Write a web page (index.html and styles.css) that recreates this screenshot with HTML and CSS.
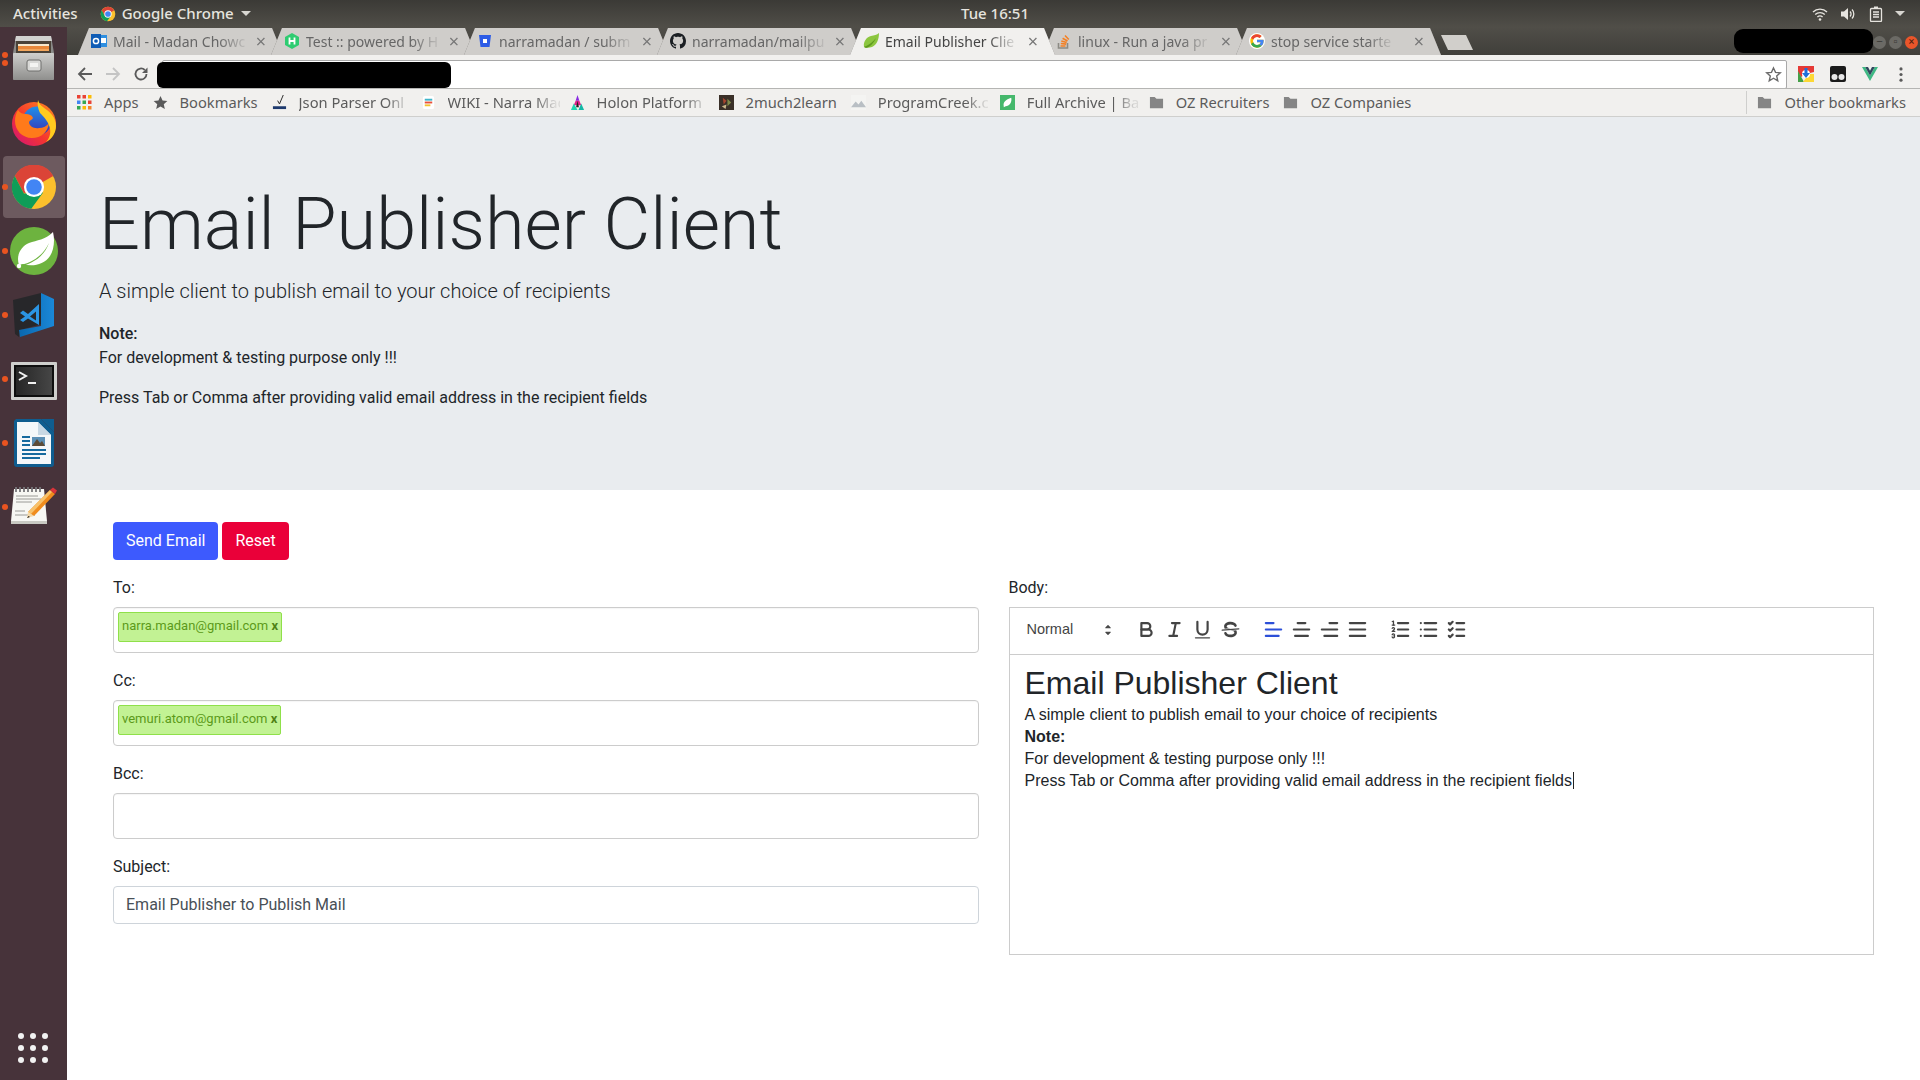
FILE: index.html
```html
<!DOCTYPE html>
<html lang="en">
<head>
    <meta charset="UTF-8">
    <title>Email Publisher Client</title>
    <link rel="stylesheet" href="styles.css">
</head>
<body>
    <div class="topbar">
        <div class="topbar-left">
            <span class="topbar-item">Activities</span>
            <svg class="app-icon" viewBox="0 0 48 48"><circle cx="24" cy="24" r="22" fill="#fbc02d"/><path fill="#db4437" d="M24 24L43 13A22 22 0 0 0 5 13L14.500 30Z"/><path fill="#0f9d58" d="M5 13A22 22 0 0 0 21 45.800L33 30L14.500 30Z"/><circle cx="24" cy="24" r="11" fill="#fff"/><circle cx="24" cy="24" r="8.500" fill="#4285f4"/></svg>
            <span class="topbar-item">Google Chrome</span>
            <span class="caret-down"></span>
        </div>
        <div class="topbar-clock">Tue 16:51</div>
        <div class="topbar-right">
            <svg class="tray-icon" viewBox="0 0 16 16" fill="none" stroke="#e6e4df" stroke-width="1.400"><path d="M1 6a10 10 0 0 1 14 0"/><path d="M3.200 8.500a7 7 0 0 1 9.600 0"/><path d="M5.400 11a4 4 0 0 1 5.200 0"/><circle cx="8" cy="13.500" r="1.300" fill="#e6e4df" stroke="none"/></svg>
            <svg class="tray-icon" viewBox="0 0 16 16" fill="none" stroke="#e6e4df" stroke-width="1.300"><path fill="#e6e4df" stroke="none" d="M1 5.500h3L8 2v12L4 10.500H1z"/><path d="M10 5.500a3.500 3.500 0 0 1 0 5"/><path d="M12 3.500a6.500 6.500 0 0 1 0 9"/></svg>
            <svg class="tray-icon" viewBox="0 0 16 16" fill="none" stroke="#e6e4df" stroke-width="1.300"><rect x="2.500" y="2.500" width="11" height="13" rx="1"/><rect x="6" y="0.500" width="4" height="2" fill="#e6e4df" stroke="none"/><path d="M5 6h6M5 8.500h6M5 11h6" stroke-width="1.500"/></svg>
            <span class="caret-down"></span>
        </div>
    </div>

    <div class="desktop">
        <div class="dock">
            <div class="dock-item dots-two"><div class="dock-tile">
                <svg class="icon-files" viewBox="0 0 41 44"><defs><linearGradient id="cab" x1="0" y1="0" x2="0" y2="1"><stop offset="0" stop-color="#cfcfcd"/><stop offset="1" stop-color="#8f8f8d"/></linearGradient></defs><path fill="#8a8a88" d="M3 0H38L41 17V42a2 2 0 0 1-2 2H2a2 2 0 0 1-2-2V17Z"/><path fill="#d2d2d0" d="M3 0H38L39 5H2Z"/><rect x="3" y="5" width="35" height="13" fill="#4a4238"/><rect x="5" y="8" width="31" height="2" fill="#f6e7cc"/><rect x="5" y="10" width="31" height="3" fill="#e8883a"/><rect x="5" y="13" width="31" height="2" fill="#f2a65c"/><rect y="17" width="41" height="27" rx="1" fill="url(#cab)"/><rect x="14" y="24" width="14" height="11" rx="2" fill="#d9d9d7" stroke="#6f6f6d"/><rect x="17" y="27" width="8" height="4" fill="#f4f4f2"/></svg>
            </div></div>
            <div class="dock-item no-dot"><div class="dock-tile">
                <svg class="icon-firefox" viewBox="0 0 44 46"><defs><linearGradient id="ff" x1="1" y1="0" x2="0" y2="1"><stop offset="0" stop-color="#ff8f1f"/><stop offset="0.550" stop-color="#f5362e"/><stop offset="1" stop-color="#d1117c"/></linearGradient><linearGradient id="ffb" x1="0.500" y1="0" x2="0.500" y2="1"><stop offset="0" stop-color="#1f90ea"/><stop offset="1" stop-color="#3b2fb0"/></linearGradient></defs><circle cx="22" cy="24" r="22" fill="url(#ff)"/><circle cx="25" cy="21" r="14.500" fill="url(#ffb)"/><path fill="#ff7a1a" d="M6 10c2 3 5 4 8 4c3 0 6 1 7 4c-1 2-3 2-4 4c0 4 5 7 10 6c4 0 8-2 10-5c-1 9-8 15-17 15c-10 0-17-8-17-17c0-4 1-8 3-11z"/><path fill="#ffcb1f" d="M26 0c1 3 2 5 5 7c7 5 13 10 13 19c0 7-4 13-10 16c3-3 5-8 4-13c-1-7-6-12-10-16c-2-4-3-9-2-13z"/></svg>
            </div></div>
            <div class="dock-item active"><div class="dock-tile">
                <svg class="chrome-lg" viewBox="0 0 48 48"><circle cx="24" cy="24" r="24" fill="#fbc02d"/><path fill="#db4437" d="M24 24L45 12A24 24 0 0 0 3 12L13 31Z"/><path fill="#0f9d58" d="M3 12A24 24 0 0 0 21 47.800L34 30L13 31Z"/><circle cx="24" cy="24" r="11" fill="#fff"/><circle cx="24" cy="24" r="8.500" fill="#4285f4"/></svg>
            </div></div>
            <div class="dock-item"><div class="dock-tile">
                <svg class="spring-lg" viewBox="0 0 48 48"><circle cx="24" cy="24" r="24" fill="#6db33f"/><path fill="#fff" d="M9 38c-3-9 1-18 10-22c8-3 16-3 24-11c2 8 1 18-3 24c-6 9-18 11-27 8z"/><path fill="#6db33f" d="M9 38c9-1 22-6 30-22c-5 14-17 21-30 24z"/><circle cx="9" cy="39" r="2.200" fill="#fff"/></svg>
            </div></div>
            <div class="dock-item"><div class="dock-tile">
                <svg class="icon-code" viewBox="0 0 41 44"><defs><linearGradient id="vs" x1="0" y1="0" x2="1" y2="0"><stop offset="0" stop-color="#0a67ad"/><stop offset="1" stop-color="#1a88d8"/></linearGradient></defs><path fill="#27272a" d="M0 7L28 0L29 31L7 37L6 44L2 41Z"/><path fill="url(#vs)" d="M28 0L41 6V33L7 44L6 37L28 33Z"/><path fill="#2b95e4" d="M7 20L10 17.500L15 21L26 11V32L15 25.500L10 29L7 27L12 23.500Z"/><path fill="#27272a" d="M17 23.500L23 18.500V27.500Z"/></svg>
            </div></div>
            <div class="dock-item"><div class="dock-tile">
                <svg class="icon-term" viewBox="0 0 46 38"><defs><linearGradient id="tm" x1="0" y1="0" x2="1" y2="0"><stop offset="0" stop-color="#262626"/><stop offset="1" stop-color="#464646"/></linearGradient></defs><rect width="46" height="38" rx="1" fill="#cfcfcd"/><rect x="3" y="3" width="40" height="32" fill="#0e0e0e"/><rect x="5" y="5" width="36" height="28" fill="url(#tm)"/><path d="M8 10L15 14L8 18" fill="none" stroke="#f2f2f2" stroke-width="2"/><rect x="17" y="20" width="8" height="2" fill="#f2f2f2"/></svg>
            </div></div>
            <div class="dock-item"><div class="dock-tile">
                <svg class="icon-writer" viewBox="0 0 40 48"><path fill="#0f5d8f" d="M2 0H27L40 13V45a3 3 0 0 1-3 3H3a3 3 0 0 1-3-3V2Z"/><path fill="#f4f7f9" d="M3 3H24L37 16V45H3Z"/><path fill="#0f5d8f" d="M27 0H40V13Z"/><path fill="#c8d8e4" d="M24 3L37 16H24Z"/><rect x="8" y="17" width="8" height="2" fill="#156a9e"/><rect x="8" y="21" width="8" height="2" fill="#156a9e"/><rect x="8" y="25" width="8" height="2" fill="#156a9e"/><rect x="18" y="18" width="13" height="9" fill="#5b8fb5"/><path fill="#5c4c38" d="M18 27L23 20L26 24L28 22L31 27Z"/><rect x="8" y="30" width="24" height="2" fill="#156a9e"/><rect x="8" y="34" width="24" height="2" fill="#156a9e"/><rect x="8" y="38" width="18" height="2" fill="#156a9e"/></svg>
            </div></div>
            <div class="dock-item"><div class="dock-tile">
                <svg class="icon-gedit" viewBox="0 0 46 37"><path fill="#f7f7f3" d="M3 2H33L36 34H0Z"/><path fill="#c9c9c2" d="M0 34H36L36 37H0Z"/><path d="M5 0v5M9 0v5M13 0v5M17 0v5M21 0v5M25 0v5M29 0v5" stroke="#77777a" stroke-width="1.800"/><path d="M5 9h22M5 12h25M5 15h16M4 24h10M4 28h20" stroke="#9a9a96" stroke-width="1"/><path fill="#f08c1c" d="M39 3L44 7L23 29L17 25Z"/><path fill="#f7c26b" d="M39 3L41 5L20 27L17 25Z"/><path fill="#f5d9a8" d="M17 25L23 29L16 31Z"/><path fill="#111" d="M17.500 29L16 31L19 30Z"/><path fill="#d8343a" d="M39 3L42 0.500L46 3.500L44 7Z"/></svg>
            </div></div>
            <svg class="show-apps" viewBox="0 0 30 30" fill="#f2f2f2"><circle cx="3" cy="3" r="3"/><circle cx="15" cy="3" r="3"/><circle cx="27" cy="3" r="3"/><circle cx="3" cy="15" r="3"/><circle cx="15" cy="15" r="3"/><circle cx="27" cy="15" r="3"/><circle cx="3" cy="27" r="3"/><circle cx="15" cy="27" r="3"/><circle cx="27" cy="27" r="3"/></svg>
        </div>

        <div class="browser">
            <div class="tabstrip">
                <div class="tab">
                    <svg class="favicon" viewBox="0 0 16 16"><rect x="6" y="2" width="10" height="12" fill="#2f8fe0"/><rect x="9" y="5" width="6" height="5" fill="#fff"/><rect y="1" width="10" height="14" fill="#0f5cb5"/><circle cx="5" cy="8" r="2.600" fill="none" stroke="#fff" stroke-width="1.500"/></svg>
                    <span class="tab-title">Mail - Madan Chowc</span><span class="tab-close">×</span>
                </div>
                <div class="tab">
                    <svg class="favicon" viewBox="0 0 16 16"><path fill="#2ecc71" d="M8 0L15 4V12L8 16L1 12V4Z"/><path d="M5.500 4.500v7M10.500 4.500v7M5.500 8h5" stroke="#fff" stroke-width="1.800" fill="none"/></svg>
                    <span class="tab-title">Test :: powered by H</span><span class="tab-close">×</span>
                </div>
                <div class="tab">
                    <svg class="favicon" viewBox="0 0 16 16"><path fill="#2d5ce6" d="M2 2H14L12.500 14H3.500Z"/><rect x="6" y="6" width="4" height="4" fill="#fff"/></svg>
                    <span class="tab-title">narramadan / subm</span><span class="tab-close">×</span>
                </div>
                <div class="tab">
                    <svg class="favicon" viewBox="0 0 16 16"><path fill="#1b1f23" d="M8 0C3.580 0 0 3.580 0 8c0 3.540 2.290 6.530 5.470 7.590.4.07.55-.17.55-.38 0-.19-.01-.82-.01-1.490-2.010.37-2.530-.49-2.690-.94-.09-.23-.48-.94-.82-1.130-.28-.15-.68-.52-.01-.53.63-.01 1.080.58 1.230.82.72 1.210 1.870.87 2.330.66.07-.52.28-.87.51-1.070-1.780-.2-3.640-.89-3.640-3.950 0-.87.31-1.590.82-2.150-.08-.2-.36-1.020.08-2.120 0 0 .67-.21 2.200.82.64-.18 1.320-.27 2-.27.68 0 1.360.09 2 .27 1.530-1.040 2.200-.82 2.200-.82.44 1.100.16 1.920.08 2.120.51.56.82 1.270.82 2.150 0 3.070-1.870 3.750-3.650 3.950.29.25.54.73.54 1.480 0 1.070-.01 1.930-.01 2.200 0 .21.15.46.55.38A8.013 8.013 0 0016 8c0-4.420-3.580-8-8-8z"/></svg>
                    <span class="tab-title">narramadan/mailpu</span><span class="tab-close">×</span>
                </div>
                <div class="tab active">
                    <svg class="favicon" viewBox="0 0 16 16"><path fill="#8cc63f" d="M1 14C0 8 4 4 8 3C11 2 14 2 16 0C16 6 14 12 9 14C6 15 3 15 1 14Z"/><path fill="#5f9a1e" d="M1 14C6 12 10 9 13 5C11 10 7 14 3 15Z"/></svg>
                    <span class="tab-title">Email Publisher Clie</span><span class="tab-close">×</span>
                </div>
                <div class="tab">
                    <svg class="favicon" viewBox="0 0 16 16" fill="none" stroke="#f48024" stroke-width="1.600"><path stroke="#8c8a84" d="M2.500 10v5h9v-5"/><path d="M4.500 13h5M4.800 10.500l5.400 .6M5.300 8l5.400 1.600M6.600 5.200l4.900 2.800M9 2.500l3.800 4"/></svg>
                    <span class="tab-title">linux - Run a java pr</span><span class="tab-close">×</span>
                </div>
                <div class="tab">
                    <svg class="favicon" viewBox="0 0 48 48"><circle cx="24" cy="24" r="24" fill="#fff"/><path fill="#fbbc05" d="M43.600 20.500H42V20H24v8h11.300C33.700 32.700 29.200 36 24 36c-6.600 0-12-5.400-12-12s5.400-12 12-12c3.100 0 5.800 1.200 8 3l5.700-5.700C34 6.100 29.300 4 24 4 13 4 4 13 4 24s9 20 20 20 20-9 20-20c0-1.200-.1-2.300-.4-3.500z"/><path fill="#ea4335" d="M6.300 14.700l6.600 4.800C14.700 15.100 19 12 24 12c3.100 0 5.800 1.200 8 3l5.700-5.700C34 6.100 29.300 4 24 4 16.300 4 9.700 8.300 6.300 14.700z"/><path fill="#34a853" d="M24 44c5.200 0 9.900-2 13.400-5.200l-6.200-5.200C29.200 35.100 26.700 36 24 36c-5.200 0-9.600-3.300-11.300-7.900l-6.500 5C9.500 39.600 16.200 44 24 44z"/><path fill="#4285f4" d="M43.600 20.500H42V20H24v8h11.300c-.8 2.200-2.200 4.200-4.100 5.600l6.200 5.200C37 39.200 44 34 44 24c0-1.200-.1-2.300-.4-3.500z"/></svg>
                    <span class="tab-title">stop service starte</span><span class="tab-close">×</span>
                </div>
                <div class="new-tab"></div>
                <div class="profile-mask"></div>
                <div class="window-buttons">
                    <span class="win-btn">–</span>
                    <span class="win-btn">▫</span>
                    <span class="win-btn close">×</span>
                </div>
            </div>

            <div class="toolbar">
                <svg class="nav-icon" viewBox="0 0 16 16" fill="none" stroke="#5a5a5a" stroke-width="1.800"><path d="M15 8H2M8 2L2 8L8 14"/></svg>
                <svg class="nav-icon" viewBox="0 0 16 16" fill="none" stroke="#c4c4c4" stroke-width="1.800"><path d="M1 8H14M8 2L14 8L8 14"/></svg>
                <svg class="nav-icon" viewBox="0 0 16 16" fill="none" stroke="#5a5a5a" stroke-width="1.800"><path d="M13.500 8a5.500 5.500 0 1 1-1.700-4"/><path fill="#5a5a5a" stroke="none" d="M14.500 1.500V7H9Z"/></svg>
                <div class="omnibox">
                    <div class="url-mask"></div>
                    <svg class="star" viewBox="0 0 16 16" fill="none" stroke="#6a6a6a" stroke-width="1.300"><path d="M8 1.800L9.900 6L14.400 6.400L11 9.400L12 13.900L8 11.500L4 13.900L5 9.400L1.600 6.400L6.100 6Z"/></svg>
                </div>
                <div class="extensions">
                    <svg class="ext-icon" viewBox="0 0 16 16"><path fill="#e53935" d="M0 0H16V6L8 8L3 11L0 6Z"/><path fill="#43a047" d="M0 5L6 16H0Z"/><path fill="#fdd835" d="M5 16L11 8H16V16Z"/><circle cx="8" cy="8" r="4" fill="#fff"/><path fill="#1e6fd9" d="M6.500 2H9.500V7H12L8 12L4 7H6.500Z"/></svg>
                    <svg class="ext-icon" viewBox="0 0 16 16"><path fill="#1b1b1b" d="M2 0H14a2 2 0 0 1 2 2V14a2 2 0 0 1-2 2H2a2 2 0 0 1-2-2V2a2 2 0 0 1 2-2Z"/><circle cx="4.500" cy="11" r="3" fill="#e8e8e8"/><circle cx="11.500" cy="11" r="3" fill="#e8e8e8"/></svg>
                    <svg class="ext-icon" viewBox="0 0 16 16"><path fill="#3fb984" d="M0 1H3.200L8 9.500L12.800 1H16L8 15Z"/><path fill="#31475e" d="M3.200 1H6L8 4.800L10 1H12.800L8 9.500Z"/></svg>
                    <svg class="menu-dots" viewBox="0 0 4 16" fill="#5a5a5a"><circle cx="2" cy="2" r="1.700"/><circle cx="2" cy="8" r="1.700"/><circle cx="2" cy="14" r="1.700"/></svg>
                </div>
            </div>

            <div class="bookmarks">
                <div class="bm">
                    <svg class="bm-icon" viewBox="0 0 15 15"><rect width="3.500" height="3.500" fill="#ea4335"/><rect x="5.500" width="3.500" height="3.500" fill="#ea4335"/><rect x="11" width="3.500" height="3.500" fill="#fbbc05"/><rect y="5.500" width="3.500" height="3.500" fill="#4285f4"/><rect x="5.500" y="5.500" width="3.500" height="3.500" fill="#34a853"/><rect x="11" y="5.500" width="3.500" height="3.500" fill="#ea4335"/><rect y="11" width="3.500" height="3.500" fill="#34a853"/><rect x="5.500" y="11" width="3.500" height="3.500" fill="#fbbc05"/><rect x="11" y="11" width="3.500" height="3.500" fill="#f4862a"/></svg>
                    <span>Apps</span>
                </div>
                <div class="bm">
                    <svg class="bm-icon" viewBox="0 0 16 16" fill="#5a5a5a"><path d="M8 1L10.200 5.800L15.300 6.300L11.500 9.800L12.600 14.900L8 12.300L3.400 14.900L4.500 9.800L.7 6.300L5.800 5.800Z"/></svg>
                    <span>Bookmarks</span>
                </div>
                <div class="bm">
                    <svg class="bm-icon" viewBox="0 0 16 16"><path d="M6 6L8 9.500L12 0" fill="none" stroke="#222" stroke-width="1"/><rect x="1" y="12" width="14" height="3" fill="#1e3a6e"/></svg>
                    <span class="bm-fade">Json Parser Onl</span>
                </div>
                <div class="bm">
                    <svg class="bm-icon" viewBox="0 0 16 16"><rect x="2" y="1" width="12" height="14" rx="2" fill="#fff"/><rect x="4" y="4" width="8" height="2" fill="#3fb5c9"/><rect x="4" y="7" width="8" height="2" fill="#e8503a"/><rect x="4" y="10" width="6" height="2" fill="#f2c230"/></svg>
                    <span class="bm-fade">WIKI - Narra Mac</span>
                </div>
                <div class="bm">
                    <svg class="bm-icon" viewBox="0 0 16 16"><path fill="#8a2be2" d="M8 0L10 6H6Z"/><path fill="#e0218a" d="M6 6H10L12 11H4Z"/><path fill="#22d3b0" d="M4 9L8 16H1Z"/><path fill="#14b8a6" d="M12 9L15 16H9Z"/><path fill="#222" d="M8 6L9.500 13H6.500Z"/></svg>
                    <span class="bm-fade">Holon Platform</span>
                </div>
                <div class="bm">
                    <svg class="bm-icon" viewBox="0 0 16 16"><rect width="16" height="16" fill="#3a3028"/><path fill="#a8452e" d="M4 3L8 6L5 10Z"/><path fill="#7f8a4a" d="M9 4L13 8L9 12Z"/><path fill="#c9b68a" d="M3 12L8 10L7 15Z"/></svg>
                    <span>2much2learn</span>
                </div>
                <div class="bm">
                    <svg class="bm-icon" viewBox="0 0 16 16"><rect width="16" height="16" fill="#f4f4f2"/><path fill="#b9bfc4" d="M0 13L5 7L8 10L11 6L16 13Z"/></svg>
                    <span class="bm-fade">ProgramCreek.c</span>
                </div>
                <div class="bm">
                    <svg class="bm-icon" viewBox="0 0 16 16"><rect width="16" height="16" fill="#45b86c"/><path fill="#fff" d="M4 12C3 8 6 5 12 3C13 8 10 12 6 12L4 13Z"/></svg>
                    <span class="bm-fade">Full Archive | Ba</span>
                </div>
                <div class="bm">
                    <svg class="bm-icon" viewBox="0 0 16 16" fill="#858585"><path d="M1 2H6L8 4H15V14H1Z"/></svg>
                    <span>OZ Recruiters</span>
                </div>
                <div class="bm">
                    <svg class="bm-icon" viewBox="0 0 16 16" fill="#858585"><path d="M1 2H6L8 4H15V14H1Z"/></svg>
                    <span>OZ Companies</span>
                </div>
                <div class="bm bm-other">
                    <svg class="bm-icon" viewBox="0 0 16 16" fill="#858585"><path d="M1 2H6L8 4H15V14H1Z"/></svg>
                    <span>Other bookmarks</span>
                </div>
            </div>

            <div class="page">
                <div class="jumbotron">
                    <h1>Email Publisher Client</h1>
                    <p class="lead">A simple client to publish email to your choice of recipients</p>
                    <p><strong>Note:</strong><br>For development &amp; testing purpose only !!!</p>
                    <p>Press Tab or Comma after providing valid email address in the recipient fields</p>
                </div>

                <div class="content">
                    <div class="actions">
                        <button class="btn btn-send">Send Email</button>
                        <button class="btn btn-reset">Reset</button>
                    </div>
                    <div class="columns">
                        <div class="fields">
                            <div class="field">
                                <label>To:</label>
                                <div class="tag-input"><span class="tag">narra.madan@gmail.com <b>x</b></span></div>
                            </div>
                            <div class="field">
                                <label>Cc:</label>
                                <div class="tag-input"><span class="tag">vemuri.atom@gmail.com <b>x</b></span></div>
                            </div>
                            <div class="field">
                                <label>Bcc:</label>
                                <div class="tag-input"></div>
                            </div>
                            <div class="field">
                                <label>Subject:</label>
                                <input class="text-input" type="text" value="Email Publisher to Publish Mail">
                            </div>
                        </div>
                        <div class="body-field">
                            <label>Body:</label>
                            <div class="ql-toolbar">
                                <span class="ql-picker">Normal
                                    <svg class="ql-arrows" viewBox="0 0 18 18"><polygon points="7 11 9 13 11 11 7 11"/><polygon points="7 7 9 5 11 7 7 7"/></svg>
                                </span>
                                <span class="ql-group">
                                    <svg class="ql-btn" viewBox="0 0 18 18"><path d="M5,4H9.500A2.500,2.500,0,0,1,12,6.500v0A2.500,2.500,0,0,1,9.500,9H5A0,0,0,0,1,5,9V4A0,0,0,0,1,5,4Z"/><path d="M5,9h5.500A2.500,2.500,0,0,1,13,11.500v0A2.500,2.500,0,0,1,10.500,14H5a0,0,0,0,1,0,0V9A0,0,0,0,1,5,9Z"/></svg>
                                    <svg class="ql-btn" viewBox="0 0 18 18"><line x1="7" x2="13" y1="4" y2="4"/><line x1="5" x2="11" y1="14" y2="14"/><line x1="8" x2="10" y1="14" y2="4"/></svg>
                                    <svg class="ql-btn" viewBox="0 0 18 18"><path d="M5,3V9a4.012,4.012,0,0,0,4,4H9a4.012,4.012,0,0,0,4-4V3"/><rect class="ql-fill" height="1" rx=".5" ry=".5" width="12" x="3" y="15"/></svg>
                                    <svg class="ql-btn" viewBox="0 0 18 18"><line class="ql-thin" x1="15.500" x2="2.500" y1="8.500" y2="9.500"/><path class="ql-fill" d="M9.007,8C6.542,7.791,6,7.519,6,6.500,6,5.792,7.283,5,9,5c1.571,0,2.765.679,2.969,1.309a1,1,0,0,0,1.900-.617C13.356,4.106,11.354,3,9,3,6.200,3,4,4.538,4,6.500a3.200,3.200,0,0,0,.5,1.843Z"/><path class="ql-fill" d="M8.984,10C11.457,10.208,12,10.479,12,11.500c0,.708-1.283,1.500-3,1.500-1.571,0-2.765-.679-2.969-1.309a1,1,0,1,0-1.900.617C4.644,13.894,6.646,15,9,15c2.800,0,5-1.538,5-3.500a3.200,3.200,0,0,0-.5-1.843Z"/></svg>
                                </span>
                                <span class="ql-group">
                                    <svg class="ql-btn ql-active" viewBox="0 0 18 18"><line x1="3" x2="15" y1="9" y2="9"/><line x1="3" x2="13" y1="14" y2="14"/><line x1="3" x2="9" y1="4" y2="4"/></svg>
                                    <svg class="ql-btn" viewBox="0 0 18 18"><line x1="15" x2="3" y1="9" y2="9"/><line x1="14" x2="4" y1="14" y2="14"/><line x1="12" x2="6" y1="4" y2="4"/></svg>
                                    <svg class="ql-btn" viewBox="0 0 18 18"><line x1="15" x2="3" y1="9" y2="9"/><line x1="15" x2="5" y1="14" y2="14"/><line x1="15" x2="9" y1="4" y2="4"/></svg>
                                    <svg class="ql-btn" viewBox="0 0 18 18"><line x1="15" x2="3" y1="9" y2="9"/><line x1="15" x2="3" y1="14" y2="14"/><line x1="15" x2="3" y1="4" y2="4"/></svg>
                                </span>
                                <span class="ql-group">
                                    <svg class="ql-btn" viewBox="0 0 18 18"><line x1="7" x2="15" y1="4" y2="4"/><line x1="7" x2="15" y1="9" y2="9"/><line x1="7" x2="15" y1="14" y2="14"/><line class="ql-thin" x1="2.500" x2="4.500" y1="5.500" y2="5.500"/><path class="ql-fill" d="M3.500,6A0.500,0.500,0,0,1,3,5.500V3.085l-0.276.138A0.500,0.500,0,0,1,2.053,3c-0.124-.247-0.023-0.324.224-0.447l1-.5A0.500,0.500,0,0,1,4,2.500v3A0.500,0.500,0,0,1,3.500,6Z"/><path class="ql-thin" d="M4.500,10.500h-2c0-.234,1.850-1.076,1.850-2.234A0.959,0.959,0,0,0,2.500,8.156"/><path class="ql-thin" d="M2.500,14.846a0.959,0.959,0,0,0,1.850-.109A0.700,0.700,0,0,0,3.750,14a0.688,0.688,0,0,0,.6-0.736,0.959,0.959,0,0,0-1.850-.109"/></svg>
                                    <svg class="ql-btn" viewBox="0 0 18 18"><line x1="6" x2="15" y1="4" y2="4"/><line x1="6" x2="15" y1="9" y2="9"/><line x1="6" x2="15" y1="14" y2="14"/><line x1="3" x2="3" y1="4" y2="4"/><line x1="3" x2="3" y1="9" y2="9"/><line x1="3" x2="3" y1="14" y2="14"/></svg>
                                    <svg class="ql-btn" viewBox="0 0 18 18"><line x1="9" x2="15" y1="4" y2="4"/><polyline points="3 4 4 5 6 3"/><line x1="9" x2="15" y1="14" y2="14"/><polyline points="3 14 4 15 6 13"/><line x1="9" x2="15" y1="9" y2="9"/><polyline points="3 9 4 10 6 8"/></svg>
                                </span>
                            </div>
                            <div class="ql-editor">
                                <h2>Email Publisher Client</h2>
                                <p>A simple client to publish email to your choice of recipients</p>
                                <p><strong>Note:</strong></p>
                                <p>For development &amp; testing purpose only !!!</p>
                                <p>Press Tab or Comma after providing valid email address in the recipient fields<span class="cursor"></span></p>
                            </div>
                        </div>
                    </div>
                </div>
            </div>
        </div>
    </div>
</body>
</html>
```

FILE: styles.css
```css
* { margin: 0; padding: 0; box-sizing: border-box; }

html, body { height: 100%; overflow: hidden; }

body {
    font-family: Roboto, "Liberation Sans", sans-serif;
    font-size: 16px;
    line-height: 1.5;
    color: #212529;
    background: #fff;
    display: flex;
    flex-direction: column;
}

/* ubuntu top bar */
.topbar {
    height: 27px;
    flex: none;
    display: flex;
    align-items: center;
    justify-content: space-between;
    position: relative;
    padding: 0 15px 0 13px;
    background: linear-gradient(#3b3a36, #504e48);
    color: #e6e4df;
    font-family: "Noto Sans", sans-serif;
    font-size: 15px;
    font-weight: 500;
}

.topbar-left, .topbar-right {
    display: flex;
    align-items: center;
}

.app-icon { width: 16px; height: 16px; margin: 0 6px 0 22px; }

.caret-down {
    width: 0;
    height: 0;
    margin-left: 7px;
    border-left: 5px solid transparent;
    border-right: 5px solid transparent;
    border-top: 5px solid #d8d6d1;
}

.topbar-clock {
    position: absolute;
    left: 961px;
    top: 0;
    line-height: 27px;
}

.topbar-right { gap: 12px; }
.tray-icon { width: 16px; height: 16px; }
.topbar-right .caret-down { margin-left: -1px; }

/* dock */
.desktop {
    flex: 1;
    min-height: 0;
    display: flex;
}

.dock {
    width: 67px;
    flex: none;
    display: flex;
    flex-direction: column;
    background: #47333a;
    padding-bottom: 17px;
}

.dock-item {
    height: 64px;
    flex: none;
    display: flex;
    align-items: center;
    justify-content: center;
    position: relative;
}

.dock-item::before {
    content: "";
    position: absolute;
    left: 2px;
    top: 29px;
    width: 6px;
    height: 6px;
    border-radius: 50%;
    background: #e95420;
}

.dock-item.no-dot::before { display: none; }
.dock-item.dots-two::before { top: 25px; box-shadow: 0 8px 0 #e95420; }

.dock-tile {
    width: 62px;
    height: 62px;
    border-radius: 4px;
    display: flex;
    align-items: center;
    justify-content: center;
}

.dock-item.active .dock-tile { background: #6d5a5f; }

.icon-files { width: 41px; height: 44px; margin-bottom: 2px; }
.icon-firefox { width: 44px; height: 46px; }
.chrome-lg { width: 44px; height: 44px; }
.spring-lg { width: 48px; height: 48px; }
.icon-code { width: 41px; height: 44px; }
.icon-term { width: 46px; height: 38px; margin-top: 4px; }
.icon-writer { width: 40px; height: 48px; }
.icon-gedit { width: 46px; height: 37px; margin-bottom: 4px; }

.show-apps {
    width: 30px;
    height: 30px;
    margin: auto 0 0 18px;
}

/* chrome window */
.browser {
    flex: 1;
    min-width: 0;
    display: flex;
    flex-direction: column;
}

.tabstrip {
    height: 28px;
    flex: none;
    display: flex;
    align-items: stretch;
    padding-left: 11px;
    background: linear-gradient(#504e48, #403f3a);
}

.tab {
    width: 205px;
    margin-right: -12px;
    padding: 0 14px 0 13px;
    display: flex;
    align-items: center;
    position: relative;
    z-index: 1;
    font-family: "Noto Sans", sans-serif;
    font-size: 14px;
    color: #666;
    filter: drop-shadow(0 0 .6px #6f6e6a);
}

.tab::before {
    content: "";
    position: absolute;
    inset: 1px 0 0 0;
    z-index: -1;
    background: #cfcdca;
    clip-path: polygon(0 100%, 11px 0, calc(100% - 11px) 0, 100% 100%);
}

.tab.active { z-index: 2; color: #444; }
.tab.active::before { background: #f1f0ee; }

.favicon { width: 16px; height: 16px; flex: none; margin-right: 6px; }

.tab-title {
    white-space: nowrap;
    -webkit-mask-image: linear-gradient(to right, #000 80%, rgba(0, 0, 0, .15));
    mask-image: linear-gradient(to right, #000 80%, rgba(0, 0, 0, .15));
}

.tab-close {
    width: 16px;
    margin-left: auto;
    text-align: center;
    font-size: 18px;
    line-height: 1;
    color: #777;
}

.new-tab {
    width: 32px;
    height: 15px;
    margin: 8px 0 0 12px;
    background: #d1cfcb;
    clip-path: polygon(0 0, calc(100% - 7px) 0, 100% 100%, 7px 100%);
}

.profile-mask {
    width: 139px;
    height: 24px;
    margin: 2px 0 0 261px;
    background: #000;
    border-radius: 9px;
}

.window-buttons {
    display: flex;
    align-items: center;
    gap: 3px;
    margin-top: 2px;
}

.win-btn {
    width: 13px;
    height: 13px;
    border-radius: 50%;
    background: #6b6a65;
    color: #3b3a36;
    font-size: 11px;
    line-height: 12px;
    text-align: center;
}

.win-btn.close { background: #e9552a; color: #4a2010; }

/* address bar */
.toolbar {
    height: 33px;
    flex: none;
    display: flex;
    align-items: flex-start;
    padding: 5px 0 0 10px;
    background: #f1f0ee;
}

.nav-icon { width: 16px; height: 16px; margin: 6px 12px 0 0; }

.omnibox {
    flex: 1;
    height: 29px;
    margin-left: 1px;
    display: flex;
    align-items: center;
    justify-content: space-between;
    background: #fff;
    border: 1px solid #a9a9a9;
    border-radius: 2px;
}

.url-mask {
    width: 294px;
    height: 26px;
    margin-left: -6px;
    background: #000;
    border-radius: 6px;
}

.star { width: 17px; height: 17px; margin-right: 4px; }

.extensions {
    width: 133px;
    height: 28px;
    flex: none;
    display: flex;
    align-items: center;
    padding-left: 11px;
    gap: 16px;
}

.ext-icon { width: 16px; height: 16px; }
.menu-dots { width: 4px; height: 15px; margin-left: 5px; }

/* bookmarks bar */
.bookmarks {
    height: 29px;
    flex: none;
    display: flex;
    align-items: center;
    gap: 14px;
    padding-left: 10px;
    background: #f1f0ee;
    border-top: 1px solid #b5b5b3;
    border-bottom: 1px solid #cfcfcd;
    font-family: "Noto Sans", sans-serif;
    font-size: 14.7px;
    color: #5b5b5b;
}

.bm {
    display: flex;
    align-items: center;
    gap: 12px;
    white-space: nowrap;
}

.bm-icon { width: 15px; height: 15px; flex: none; }

.bm-fade {
    width: 112px;
    margin-right: -4px;
    -webkit-mask-image: linear-gradient(to right, #000 78%, rgba(0, 0, 0, .15) 96%);
    mask-image: linear-gradient(to right, #000 78%, rgba(0, 0, 0, .15) 96%);
}

.bm-other {
    margin-left: auto;
    margin-right: 14px;
    padding-left: 10px;
    border-left: 1px solid #cfcfcd;
}

/* page */
.page {
    flex: 1;
    min-height: 0;
    background: #fff;
}

.jumbotron {
    height: 373px;
    padding: 65px 32px 0;
    background: #e9ecef;
}

.jumbotron h1 {
    font-size: 72px;
    font-weight: 300;
    line-height: 1.2;
    margin-bottom: 8px;
}

.jumbotron p { margin-bottom: 16px; }
.jumbotron p strong { font-weight: 500; }

.jumbotron .lead {
    font-size: 20px;
    font-weight: 300;
}

.content { padding: 32px 46px 0 46px; }

.actions {
    display: flex;
    gap: 4px;
    margin-bottom: 15px;
}

.btn {
    height: 38px;
    padding: 0 12px 2px;
    border: 1px solid transparent;
    border-radius: 4px;
    color: #fff;
    font-family: inherit;
    font-size: 16px;
}

.btn-send { background: #3d5afe; }
.btn-reset { background: #ea0039; }

.columns {
    display: grid;
    grid-template-columns: 1fr 1fr;
    gap: 30px;
}

.field { margin-bottom: 15px; }

label {
    display: block;
    height: 24px;
    margin-bottom: 8px;
    line-height: 26px;
}

.tag-input {
    height: 46px;
    padding: 4px;
    border: 1px solid #ccc;
    border-radius: 4px;
    box-shadow: inset 0 1px 1px rgba(0, 0, 0, .04);
}

.tag {
    display: inline-block;
    height: 30px;
    padding: 0 3px;
    border: 1px solid #8fe04a;
    border-radius: 2px;
    background: #c2f294;
    color: #5c9a1a;
    font-size: 13px;
    line-height: 26px;
}

.tag b { color: #4f8216; }

.text-input {
    display: block;
    width: 100%;
    height: 38px;
    padding: 0 12px 1px;
    border: 1px solid #ced4da;
    border-radius: 4px;
    color: #495057;
    font-family: inherit;
    font-size: 16px;
}

/* quill editor */
.body-field { display: flex; flex-direction: column; }

.ql-toolbar {
    height: 48px;
    display: flex;
    align-items: center;
    padding: 0 8px 3px 8px;
    border: 1px solid #ccc;
    font-family: "Liberation Sans", sans-serif;
}

.ql-picker {
    width: 100px;
    margin-right: 15px;
    padding-left: 9px;
    display: flex;
    align-items: center;
    justify-content: space-between;
    font-size: 14.5px;
    color: #444;
}

.ql-arrows {
    width: 20px;
    height: 20px;
    fill: #444;
    stroke: #444;
    stroke-linejoin: round;
}

.ql-group { display: flex; margin-right: 15px; }

.ql-btn {
    width: 23px;
    height: 23px;
    margin: 0 2.5px;
    fill: none;
    stroke: #444;
    stroke-width: 1.700;
    stroke-linecap: round;
    stroke-linejoin: round;
}

.ql-btn .ql-fill { fill: #444; stroke: none; }
.ql-btn .ql-thin { stroke-width: 1; }
.ql-btn.ql-active { stroke: #2c4fd8; }

.ql-editor {
    height: 300px;
    padding: 8px 15px;
    border: 1px solid #ccc;
    border-top: 0;
    font-family: "Liberation Sans", sans-serif;
    line-height: 22px;
}

.ql-editor h2 {
    font-size: 32px;
    font-weight: 400;
    line-height: 41px;
}

.ql-editor strong { font-weight: 700; }

.cursor {
    display: inline-block;
    width: 1px;
    height: 17px;
    margin-left: 1px;
    background: #222;
    vertical-align: -3px;
}
```
